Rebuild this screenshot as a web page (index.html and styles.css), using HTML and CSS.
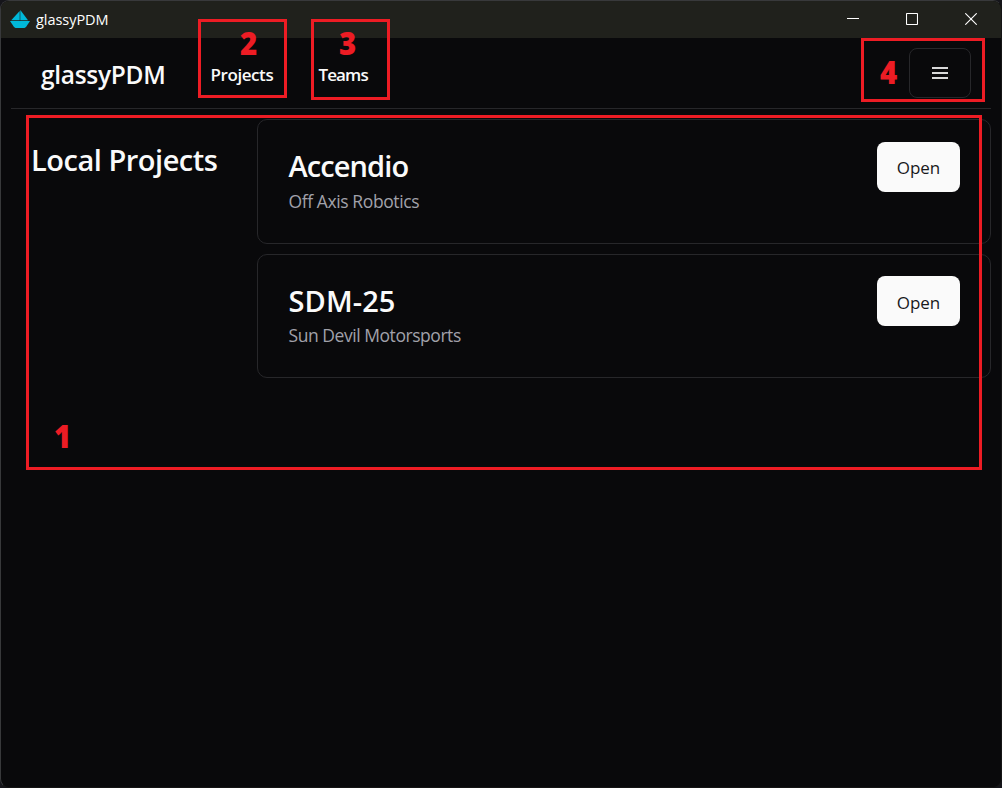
FILE: index.html
```html
<!DOCTYPE html>
<html lang="en">
<head>
<meta charset="utf-8">
<title>glassyPDM</title>
<link rel="stylesheet" href="styles.css">
</head>
<body>
<div class="window">
  <header class="titlebar">
    <svg class="logo" width="20" height="19" viewBox="0 0 20 19"><g fill="#00b8d9"><path d="M9.7 1v9.3H1.2z"/><path d="M10.3 0l7.7 10.3h-7.7z"/><path d="M0 11h20l-4 6-1.5 1h-9L4 17z"/></g></svg>
    <span class="app-name">glassyPDM</span>
    <div class="controls">
      <svg width="12" height="12" viewBox="0 0 12 12"><path d="M0 5.5h12"/></svg>
      <svg width="12" height="12" viewBox="0 0 12 12"><rect x=".5" y=".5" width="11" height="11" rx=".7"/></svg>
      <svg width="12" height="12" viewBox="0 0 12 12"><path d="M.3.3l11.4 11.4M11.7.3L.3 11.7"/></svg>
    </div>
  </header>
  <nav class="navbar">
    <span class="brand">glassyPDM</span>
    <a class="link projects">Projects</a>
    <a class="link teams">Teams</a>
    <button class="menu" aria-label="Menu"><svg width="16" height="12" viewBox="0 0 16 12"><path d="M0 1h16M0 6h16M0 11h16" stroke="#d8d8d8" stroke-width="2"/></svg></button>
  </nav>
  <main class="content">
    <h1 class="heading"><span>Local Projects</span></h1>
    <div class="cards">
      <section class="card first">
        <div><h2 class="name accendio">Accendio</h2><p class="team robotics">Off Axis Robotics</p></div>
        <button class="open">Open</button>
      </section>
      <section class="card">
        <div><h2 class="name sdm">SDM-25</h2><p class="team motorsports">Sun Devil Motorsports</p></div>
        <button class="open second">Open</button>
      </section>
    </div>
  </main>
</div>
<div class="mark mark-1"><b>1</b></div>
<div class="mark mark-2"><b>2</b></div>
<div class="mark mark-3"><b>3</b></div>
<div class="mark mark-4"><b>4</b></div>
</body>
</html>
```
FILE: styles.css
```css
* { box-sizing: border-box; }
body { margin: 0; background: #15151a; font-family: "Open Sans", "Noto Sans", sans-serif; color: #fafafa; overflow: hidden; }
h1, h2, p { margin: 0; }
button { font: inherit; padding: 0; }
.window { width: 1002px; height: 788px; border: 1px solid #38393b; border-right-color: #151515; border-bottom-color: #151515; border-radius: 9px; background: #09090b; overflow: hidden; }
.titlebar { height: 37px; background: #20211c; display: flex; align-items: center; padding: 0 24px 1px 9px; }
.logo { margin-left: -.5px; }
.app-name { font-size: 14.5px; margin-left: 6.5px; margin-top: 2px; letter-spacing: -.05px; color: #fff; line-height: 20px; }
.controls { margin-left: auto; display: flex; gap: 47px; }
.controls svg { fill: none; stroke: #fff; stroke-width: 1.1; }
.navbar { height: 71px; margin: 0 10px; padding: 0 20px 0 30px; border-bottom: 1px solid #27272a; display: flex; align-items: center; }
.brand { width: 169.5px; font-size: 24.5px; font-weight: 600; letter-spacing: -.3px; line-height: 34px; margin-top: 4px; white-space: nowrap; }
.link { font-size: 17px; font-weight: 600; letter-spacing: -.42px; line-height: 24px; margin-top: 4px; }
.projects { width: 108px; }
.teams { letter-spacing: -.9px; }
.menu { margin-left: auto; margin-top: -1px; width: 62px; height: 50px; border: 1px solid #27272a; border-radius: 8px; background: transparent; display: grid; place-items: center; }
.content { display: grid; grid-template-columns: 225px 734px; padding: 10px 0 0 31px; }
.heading { font-size: 29px; font-weight: 600; letter-spacing: -.48px; line-height: 40px; padding-top: 21px; white-space: nowrap; }
.heading span { margin-left: -1px; }
.cards { display: grid; gap: 10px; }
.card { height: 124px; border: 1px solid #27272a; border-radius: 10px; padding: 21px 30px 0 30.5px; display: flex; justify-content: space-between; align-items: flex-start; }
.first { height: 125px; padding-top: 22px; }
.name { font-size: 29px; font-weight: 600; line-height: 40px; margin-top: 5px; }
.accendio { letter-spacing: -.9px; margin-top: 4px; }
.sdm { letter-spacing: .1px; }
.team { font-size: 17.5px; color: #a1a1aa; line-height: 24px; margin-top: 3px; letter-spacing: -.4px; }
.motorsports { margin-top: 2px; letter-spacing: -.45px; }
.open { width: 83px; height: 50px; background: #fafafa; color: #18181b; border: 0; border-radius: 8px; font-size: 17px; line-height: 24px; padding-top: 2px; }
.second { padding-top: 4px; }
.mark { position: absolute; border: 3px solid #ed1c24; }
.mark b { position: absolute; color: #ed1c24; font: 800 32px/32px "Open Sans", sans-serif; transform: scaleX(.92); transform-origin: left; }
.mark-1 { left: 26px; top: 115px; width: 956px; height: 355px; }
.mark-1 b { left: 25px; top: 302px; }
.mark-2 { left: 198px; top: 19px; width: 89px; height: 79px; }
.mark-2 b { left: 38.5px; top: 5px; }
.mark-3 { left: 311px; top: 19px; width: 79px; height: 81px; }
.mark-3 b { left: 24.5px; top: 5px; }
.mark-4 { left: 861px; top: 38px; width: 124px; height: 64px; }
.mark-4 b { left: 16px; top: 15px; }
```
